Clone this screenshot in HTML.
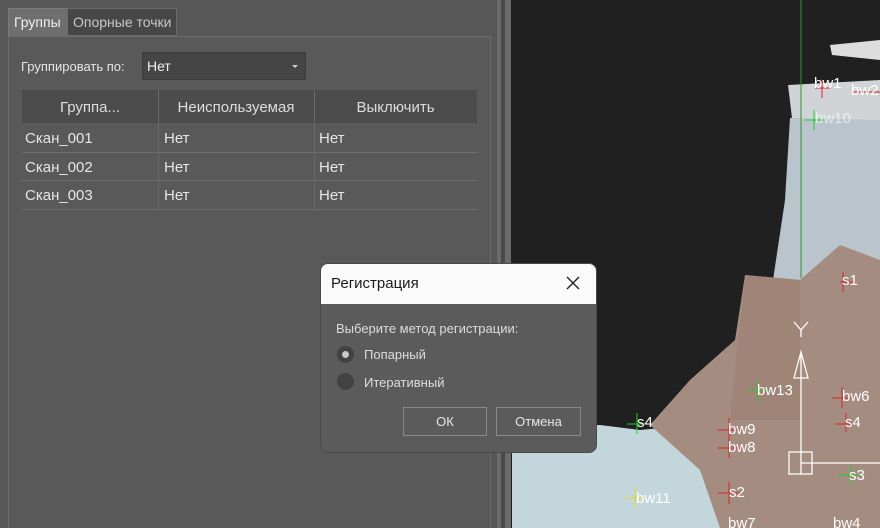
<!DOCTYPE html><html><head><meta charset="utf-8"><style>
*{margin:0;padding:0;box-sizing:border-box}
html,body{width:880px;height:528px;overflow:hidden}
body{position:relative;background:#202020;font-family:"Liberation Sans",sans-serif;}
.a{position:absolute}
.panel{left:0;top:0;width:511px;height:528px;background:#575757}
.t{font-size:14px;color:#e6e6e6;white-space:nowrap}
</style></head><body>
<div class="a panel"></div>
<div class="a" style="left:497px;top:0;width:4px;height:528px;background:#6a6a6a"></div>
<div class="a" style="left:505px;top:0;width:6px;height:528px;background:#6a6a6a"></div>
<div class="a" style="left:501px;top:0;width:4px;height:528px;background:#4a4a4a"></div>
<div class="a" style="left:8px;top:8px;width:60px;height:29px;background:#6e6e6e;border:1px solid #7a7a7a"></div>
<div class="a t" style="left:14px;top:14px;color:#f0f0f0">Группы</div>
<div class="a" style="left:67px;top:8px;width:110px;height:28px;background:#474747;border:1px solid #6a6a6a"></div>
<div class="a t" style="left:73px;top:14px;color:#c8c8c8">Опорные точки</div>
<div class="a" style="left:8px;top:36px;width:483px;height:492px;border:1px solid #6c6c6c;border-bottom:none;background:#595959"></div>
<div class="a t" style="left:21px;top:59px;font-size:13px">Группировать по:</div>
<div class="a" style="left:142px;top:52px;width:164px;height:28px;background:#454545;border:1px solid #3c3c3c"></div>
<div class="a t" style="left:147px;top:58px;color:#f0f0f0">Нет</div>
<div class="a" style="left:292px;top:65px;width:0;height:0;border-left:3px solid transparent;border-right:3px solid transparent;border-top:3px solid #ccc"></div>
<div class="a" style="left:22px;top:90px;width:455px;height:33px;background:#4b4b4b"></div>
<div class="a" style="left:158px;top:90px;width:1px;height:119px;background:#6a6a6a"></div>
<div class="a" style="left:314px;top:90px;width:1px;height:119px;background:#6a6a6a"></div>
<div class="a t" style="left:22px;top:99px;width:136px;text-align:center;font-size:15px;color:#ddd">Группа...</div>
<div class="a t" style="left:158px;top:99px;width:156px;text-align:center;font-size:15px;color:#ddd">Неиспользуемая</div>
<div class="a t" style="left:314px;top:99px;width:163px;text-align:center;font-size:15px;color:#ddd">Выключить</div>
<div class="a" style="left:22px;top:152px;width:455px;height:1px;background:#6e6e6e"></div>
<div class="a" style="left:22px;top:180px;width:455px;height:1px;background:#6e6e6e"></div>
<div class="a" style="left:22px;top:209px;width:455px;height:1px;background:#6e6e6e"></div>
<div class="a t" style="left:25px;top:130px;font-size:15px">Скан_001</div><div class="a t" style="left:164px;top:130px;font-size:15px">Нет</div><div class="a t" style="left:319px;top:130px;font-size:15px">Нет</div>
<div class="a t" style="left:25px;top:159px;font-size:15px">Скан_002</div><div class="a t" style="left:164px;top:159px;font-size:15px">Нет</div><div class="a t" style="left:319px;top:159px;font-size:15px">Нет</div>
<div class="a t" style="left:25px;top:187px;font-size:15px">Скан_003</div><div class="a t" style="left:164px;top:187px;font-size:15px">Нет</div><div class="a t" style="left:319px;top:187px;font-size:15px">Нет</div>
<svg class="a" style="left:511px;top:0" width="369" height="528" viewBox="511 0 369 528">
<polygon points="512,428 600,425 640,430 800,415 880,420 880,528 512,528" fill="#c2d6dc"/>
<polygon points="790,118 880,112 880,300 770,300 785,200" fill="#b9c4cc"/>
<polygon points="788,85 880,80 880,120 792,118" fill="#d0d4d6"/>
<polygon points="830,45 880,40 880,60 832,55" fill="#ddd"/>
<polygon points="650,425 690,380 735,340 745,275 800,280 840,245 880,260 880,528 720,528 700,470" fill="#a48c80"/>
<polygon points="745,275 800,280 800,420 730,420" fill="#a08478"/>
<line x1="801" y1="0" x2="801" y2="278" stroke="#2c9a2c"/>
<g stroke="#fff" fill="none" stroke-width="1.3"><line x1="801" y1="355" x2="801" y2="474"/><line x1="801" y1="463" x2="880" y2="463"/><rect x="789" y="452" width="23" height="22"/><polygon points="801,352 794,378 808,378"/><polyline points="794,322 801,330 808,322"/><line x1="801" y1="330" x2="801" y2="337"/></g>
<g font-family="Liberation Sans" font-size="15" fill="#fff">
<g stroke="#e02020"><line x1="815" y1="88" x2="830" y2="88"/><line x1="822" y1="80" x2="822" y2="98"/><line x1="840" y1="282" x2="855" y2="282"/><line x1="843" y1="272" x2="843" y2="292"/><line x1="832" y1="398" x2="852" y2="398"/><line x1="842" y1="387" x2="842" y2="408"/><line x1="836" y1="424" x2="858" y2="424"/><line x1="846" y1="413" x2="846" y2="432"/><line x1="718" y1="430" x2="740" y2="430"/><line x1="729" y1="418" x2="729" y2="442"/><line x1="718" y1="448" x2="740" y2="448"/><line x1="729" y1="438" x2="729" y2="458"/><line x1="718" y1="493" x2="740" y2="493"/><line x1="729" y1="482" x2="729" y2="504"/><line x1="852" y1="92" x2="880" y2="92"/></g>
<g stroke="#20d020"><line x1="805" y1="120" x2="825" y2="120"/><line x1="814" y1="110" x2="814" y2="130"/><line x1="748" y1="390" x2="770" y2="390"/><line x1="758" y1="380" x2="758" y2="402"/><line x1="838" y1="475" x2="860" y2="475"/><line x1="851" y1="465" x2="851" y2="485"/><line x1="627" y1="424" x2="645" y2="424"/><line x1="637" y1="413" x2="637" y2="434"/></g>
<g stroke="#e0e020"><line x1="625" y1="498" x2="646" y2="498"/><line x1="635" y1="488" x2="635" y2="508"/></g>
<text x="814" y="88">bw1</text><text x="851" y="95">bw2</text><text x="815" y="123" opacity=".6">bw10</text><text x="842" y="285">s1</text><text x="757" y="395">bw13</text><text x="842" y="401">bw6</text><text x="845" y="427">s4</text><text x="728" y="434">bw9</text><text x="728" y="452">bw8</text><text x="849" y="480">s3</text><text x="637" y="427">s4</text><text x="636" y="503">bw11</text><text x="729" y="497">s2</text><text x="728" y="528">bw7</text><text x="833" y="528">bw4</text>
</g></svg>
<div class="a" style="left:320px;top:263px;width:277px;height:190px;border-radius:8px;background:#5b5b5b;overflow:hidden;border:1px solid #4a4a4a">
<div style="height:40px;background:#fafafa"></div></div>
<div class="a t" style="left:331px;top:275px;font-size:15px;color:#1a1a1a">Регистрация</div>
<svg class="a" style="left:565px;top:275px" width="16" height="16"><path d="M2 2L14 14M14 2L2 14" stroke="#222" stroke-width="1.4"/></svg>
<div class="a t" style="left:336px;top:321px;font-size:13px;color:#ddd">Выберите метод регистрации:</div>
<div class="a" style="left:337px;top:346px;width:17px;height:17px;border-radius:50%;background:#424242"></div>
<div class="a" style="left:342px;top:351px;width:7px;height:7px;border-radius:50%;background:#c8c8c8"></div>
<div class="a t" style="left:364px;top:347px;font-size:13px;color:#ddd">Попарный</div>
<div class="a" style="left:337px;top:373px;width:17px;height:17px;border-radius:50%;background:#424242"></div>
<div class="a t" style="left:364px;top:375px;font-size:13px;color:#ddd">Итеративный</div>
<div class="a t" style="left:403px;top:407px;width:84px;height:29px;border:1px solid #8a8a8a;text-align:center;line-height:27px;font-size:13px">ОК</div>
<div class="a t" style="left:496px;top:407px;width:85px;height:29px;border:1px solid #8a8a8a;text-align:center;line-height:27px;font-size:13px">Отмена</div>
</body></html>
